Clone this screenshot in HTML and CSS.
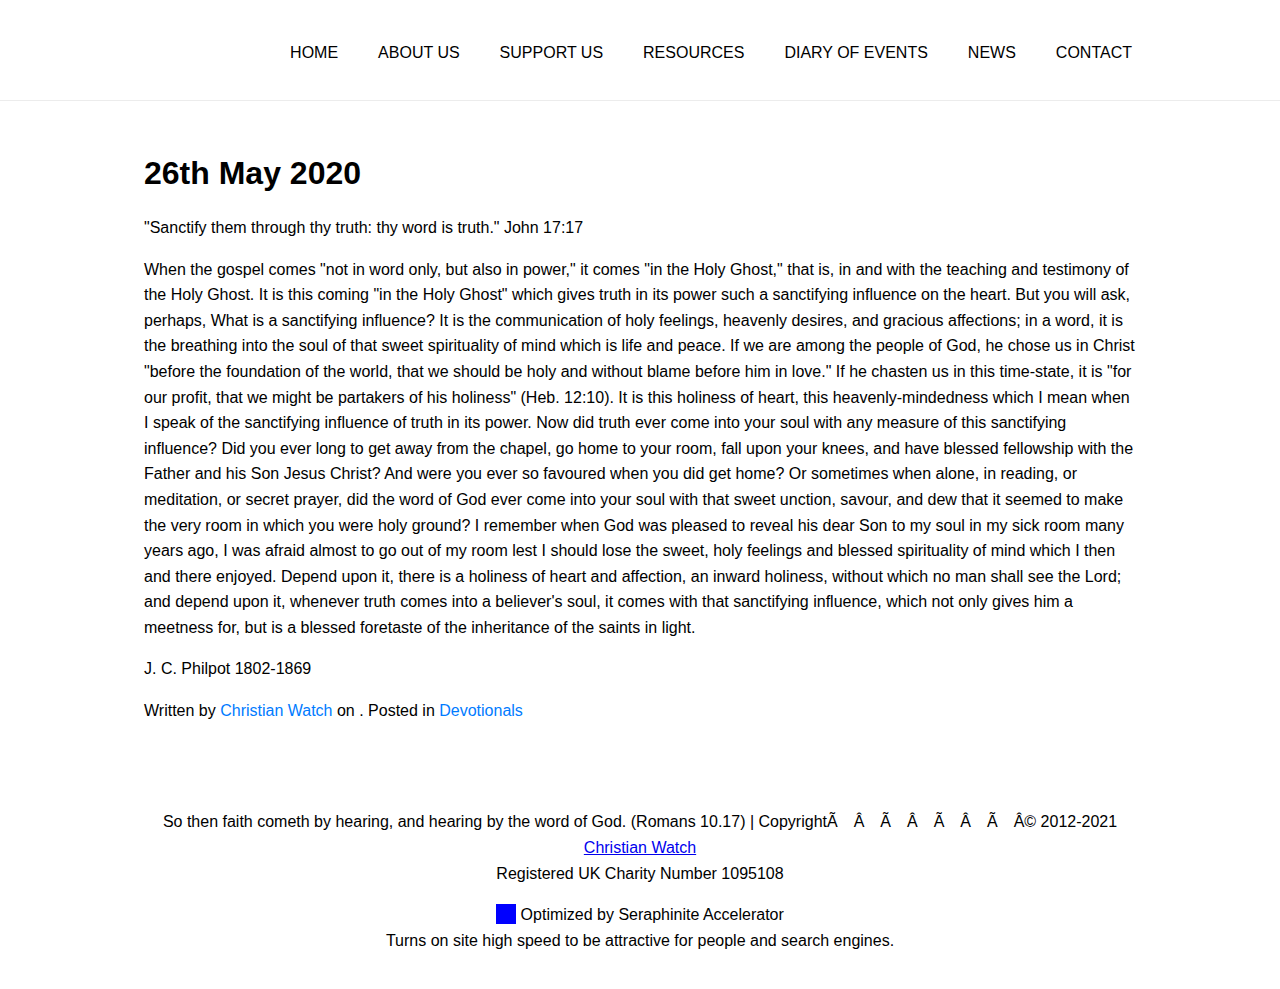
FILE: index.html
```html
<!DOCTYPE html>
<html lang="en">
<head>
<meta charset="utf-8">
<title>26th May 2020</title>
<link rel="stylesheet" href="styles.css">
</head>
<body>
<header class="site-header">
  <div class="header-inner">
    <nav class="main-nav">
      <a href="#">HOME</a>
      <a href="#">ABOUT US</a>
      <a href="#">SUPPORT US</a>
      <a href="#">RESOURCES</a>
      <a href="#">DIARY OF EVENTS</a>
      <a href="#">NEWS</a>
      <a href="#">CONTACT</a>
    </nav>
  </div>
</header>
<main class="content">
  <article class="post">
    <h1 class="post-title">26th May 2020</h1>
    <p class="post-lead">"Sanctify them through thy truth: thy word is truth." John 17:17</p>
    <p>When the gospel comes "not in word only, but also in power," it comes "in the Holy Ghost," that is, in and with the teaching and testimony of the Holy Ghost. It is this coming "in the Holy Ghost" which gives truth in its power such a sanctifying influence on the heart. But you will ask, perhaps, What is a sanctifying influence? It is the communication of holy feelings, heavenly desires, and gracious affections; in a word, it is the breathing into the soul of that sweet spirituality of mind which is life and peace. If we are among the people of God, he chose us in Christ "before the foundation of the world, that we should be holy and without blame before him in love." If he chasten us in this time-state, it is "for our profit, that we might be partakers of his holiness" (Heb. 12:10). It is this holiness of heart, this heavenly-mindedness which I mean when I speak of the sanctifying influence of truth in its power. Now did truth ever come into your soul with any measure of this sanctifying influence? Did you ever long to get away from the chapel, go home to your room, fall upon your knees, and have blessed fellowship with the Father and his Son Jesus Christ? And were you ever so favoured when you did get home? Or sometimes when alone, in reading, or meditation, or secret prayer, did the word of God ever come into your soul with that sweet unction, savour, and dew that it seemed to make the very room in which you were holy ground? I remember when God was pleased to reveal his dear Son to my soul in my sick room many years ago, I was afraid almost to go out of my room lest I should lose the sweet, holy feelings and blessed spirituality of mind which I then and there enjoyed. Depend upon it, there is a holiness of heart and affection, an inward holiness, without which no man shall see the Lord; and depend upon it, whenever truth comes into a believer's soul, it comes with that sanctifying influence, which not only gives him a meetness for, but is a blessed foretaste of the inheritance of the saints in light.</p>
    <p>J. C. Philpot 1802-1869</p>
    <p class="post-meta">Written by <a href="#">Christian Watch</a> on . Posted in <a href="#">Devotionals</a></p>
  </article>
</main>
<footer class="site-footer">
  <p>So then faith cometh by hearing, and hearing by the word of God. (Romans 10.17) | CopyrightÃ&emsp;Â&emsp;Ã&emsp;Â&emsp;Ã&emsp;Â&emsp;Ã&emsp;Â© 2012-2021 <a href="#" class="footer-link">Christian Watch</a><br>Registered UK Charity Number 1095108</p>
  <p><span class="seraph-icon"></span> Optimized by Seraphinite Accelerator<br>Turns on site high speed to be attractive for people and search engines.</p>
</footer>
</body>
</html>
```

FILE: styles.css
```css
html, body {
  margin: 0;
  padding: 0;
}

body {
  font-family: "Liberation Sans", Arial, Helvetica, sans-serif;
  font-size: 16px;
  line-height: 1.6;
  color: #000;
  background: #fff;
}

.site-header {
  border-bottom: 1px solid #ececec;
}

.header-inner {
  max-width: 1024px;
  margin: 0 auto;
  height: 100px;
  box-sizing: border-box;
  padding-top: 5px;
  display: flex;
  align-items: center;
  justify-content: flex-end;
}

.main-nav {
  display: flex;
  line-height: 1.2;
}

.main-nav a {
  color: #000;
  text-decoration: none;
  padding: 0 20px;
  font-size: 16px;
}

.content {
  max-width: 992px;
  margin: 0 auto;
  padding: 32px 0 38px;
}

.post-title {
  font-size: 32px;
  line-height: 1.2;
  font-weight: bold;
  margin: 21.4px 0 22.2px;
}

.post p {
  margin: 16px 0;
}

.post .post-lead {
  margin-bottom: 14.8px;
}

.post-meta a {
  color: #007bff;
  text-decoration: none;
}

.site-footer {
  max-width: 992px;
  margin: 0 auto;
  padding: 16px 0 30px;
  text-align: center;
  line-height: 26px;
}

.site-footer p {
  margin: 15px 0;
}

.footer-link {
  color: #0000ee;
  text-decoration: underline;
}

.seraph-icon {
  display: inline-block;
  width: 20px;
  height: 20px;
  background: #0000ff;
  vertical-align: -4px;
}
```
